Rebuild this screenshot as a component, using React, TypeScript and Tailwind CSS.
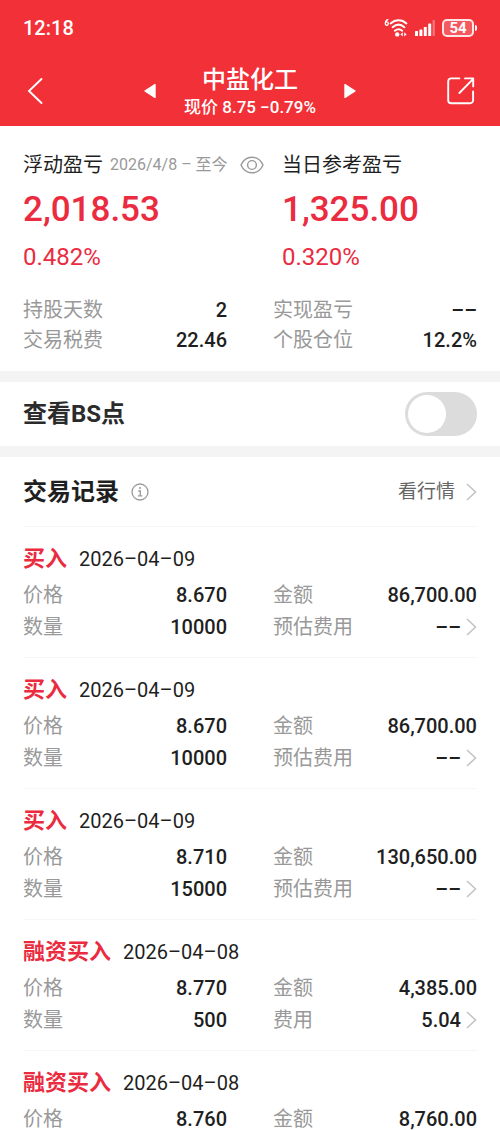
interface TradeRecord {
  type: string;
  date: string;
  price: string;
  amount: string;
  quantity?: string;
  feeLabel?: string;
  fee?: string;
}

const records: TradeRecord[] = [
  { type: "买入", date: "2026–04–09", price: "8.670", amount: "86,700.00", quantity: "10000", feeLabel: "预估费用", fee: "––" },
  { type: "买入", date: "2026–04–09", price: "8.670", amount: "86,700.00", quantity: "10000", feeLabel: "预估费用", fee: "––" },
  { type: "买入", date: "2026–04–09", price: "8.710", amount: "130,650.00", quantity: "15000", feeLabel: "预估费用", fee: "––" },
  { type: "融资买入", date: "2026–04–08", price: "8.770", amount: "4,385.00", quantity: "500", feeLabel: "费用", fee: "5.04" },
  { type: "融资买入", date: "2026–04–08", price: "8.760", amount: "8,760.00" },
];

const stats = [
  { label: "持股天数", value: "2" },
  { label: "实现盈亏", value: "––" },
  { label: "交易税费", value: "22.46" },
  { label: "个股仓位", value: "12.2%" },
];

function ChevronRight() {
  return (
    <svg className="h-5 w-3 shrink-0" viewBox="0 0 12 20" fill="none" stroke="#c4c4c4" strokeWidth="1.6" aria-hidden="true">
      <path d="M2 2l8.5 8L2 18" />
    </svg>
  );
}

function StatusBar() {
  return (
    <div className="flex h-14 items-center justify-between px-[23px]">
      <span className="text-xl font-medium">12:18</span>
      <div className="flex items-center gap-[7px]">
        {/* Wi-Fi 6 */}
        <svg className="h-5 w-6" viewBox="0 0 24 20" fill="none" stroke="#fff" strokeWidth="2" strokeLinecap="round" aria-hidden="true">
          <path d="M3.9 1.6C2.2 2 1.3 3.8 1.3 5.6a1.500 1.700 0 1 0 3 0a1.500 1.700 0 1 0-3 0" strokeWidth="1.300" />
          <path d="M6.600 5.400c4.800-4.200 11.200-4.200 15.800 0" />
          <path d="M8.600 9.200c3.700-3.200 8.100-3.200 11.800 0" />
          <path d="M10.800 12.700c2.400-1.900 5.200-1.900 7.400 0" />
          <circle cx="13.200" cy="16.400" r="2.200" fill="#fff" stroke="none" />
          <path d="M18.800 14.200v4.400L16.400 16.400zM20.200 14.200v4.400l2.400-2.200z" fill="#fff" stroke="none" />
        </svg>
        <svg className="h-4 w-5" viewBox="0 0 20 16" fill="#fff" aria-hidden="true">
          <rect x="0" y="11" width="3" height="5" rx="0.6" />
          <rect x="4.4" y="9.4" width="3" height="6.6" rx="0.6" />
          <rect x="8.8" y="7" width="3" height="9" rx="0.6" />
          <rect x="13.2" y="3.4" width="3" height="12.6" rx="0.6" />
          <rect x="17.6" y="0" width="2.2" height="16" rx="0.6" opacity="0.35" />
        </svg>
        <div className="flex items-center gap-px">
          <span className="flex h-[18px] w-8 items-center justify-center rounded-[5px] border-2 border-white/85 bg-white/20 text-[15px] font-bold">
            54
          </span>
          <span className="h-1.5 w-0.5 rounded-r bg-white" />
        </div>
      </div>
    </div>
  );
}

function NavBar() {
  return (
    <div className="grid h-[70px] grid-cols-[1fr_auto_1fr] items-center px-[23px]">
      <button type="button" aria-label="返回" className="justify-self-start p-1">
        <svg className="h-7 w-4" viewBox="0 0 16 28" fill="none" stroke="#fff" strokeWidth="1.9" strokeLinecap="round" aria-hidden="true">
          <path d="M14.5 2L2 14l12.5 12" />
        </svg>
      </button>
      <div className="flex items-center gap-7">
        <button type="button" aria-label="上一只">
          <svg className="h-4 w-3" viewBox="0 0 12 16" fill="#fff" stroke="#fff" strokeWidth="1.4" strokeLinejoin="round" aria-hidden="true">
            <path d="M1 8l10-6.4v12.8z" />
          </svg>
        </button>
        <div className="pt-0.5 text-center">
          <h1 className="text-2xl leading-[30px] font-medium">中盐化工</h1>
          <p className="text-[17px] leading-6 font-medium">现价 8.75 −0.79%</p>
        </div>
        <button type="button" aria-label="下一只">
          <svg className="h-4 w-3" viewBox="0 0 12 16" fill="#fff" stroke="#fff" strokeWidth="1.4" strokeLinejoin="round" aria-hidden="true">
            <path d="M11 8L1 1.6v12.8z" />
          </svg>
        </button>
      </div>
      <button type="button" aria-label="分享" className="justify-self-end">
        <svg className="size-8" viewBox="0 0 32 32" fill="none" stroke="#fff" strokeWidth="1.9" strokeLinecap="round" strokeLinejoin="round" aria-hidden="true">
          <path d="M14.4 3.4H6.2a3 3 0 0 0-3 3v18.8a3 3 0 0 0 3 3h18.9a3 3 0 0 0 3-3V16.4" />
          <path d="M14.4 18L28 4.2M20 3.4h8.2v8" />
        </svg>
      </button>
    </div>
  );
}

function Summary() {
  return (
    <section className="px-[23px] pt-6 pb-4">
      <div className="grid grid-cols-[241px_1fr] gap-[18px]">
        <div>
          <div className="flex items-center text-xl leading-[30px] whitespace-nowrap">
            <h2>浮动盈亏</h2>
            <span className="ml-[7px] text-base text-[#999]">2026/4/8 – 至今</span>
            <button type="button" aria-label="隐藏金额" className="ml-auto">
              <svg className="h-5 w-6" viewBox="0 0 24 20" fill="none" stroke="#999" strokeWidth="1.4" aria-hidden="true">
                <path d="M1 10c4.6-10.4 17.400-10.400 22 0c-4.600 10.400-17.400 10.400-22 0z" />
                <circle cx="12" cy="10" r="4.400" />
              </svg>
            </button>
          </div>
          <p className="mt-2 text-[35px] leading-11 font-medium text-[#ea2b40]">2,018.53</p>
          <p className="mt-2.5 text-2xl leading-[30px] text-[#ea2b40]">0.482%</p>
        </div>
        <div>
          <h2 className="text-xl leading-[30px]">当日参考盈亏</h2>
          <p className="mt-2 text-[35px] leading-11 font-medium text-[#ea2b40]">1,325.00</p>
          <p className="mt-2.5 text-2xl leading-[30px] text-[#ea2b40]">0.320%</p>
        </div>
      </div>
      <dl className="mt-[23px] grid grid-cols-2 gap-x-[46px] text-xl leading-[30px]">
        {stats.map((stat) => (
          <div key={stat.label} className="flex justify-between">
            <dt className="text-[#999]">{stat.label}</dt>
            <dd className="font-medium">{stat.value}</dd>
          </div>
        ))}
      </dl>
    </section>
  );
}

function RecordItem({ record }: { record: TradeRecord }) {
  return (
    <li className="border-t border-[#f6f6f6] pt-4 pb-3.5">
      <div className="flex items-center gap-3 text-xl leading-8">
        <span className="text-[22px] font-bold text-[#ea2b40]">{record.type}</span>
        <span>{record.date}</span>
      </div>
      <dl className="mt-1 grid grid-cols-2 gap-x-[46px] text-xl leading-8">
        <div className="flex justify-between">
          <dt className="text-[#999]">价格</dt>
          <dd className="font-medium">{record.price}</dd>
        </div>
        <div className="flex justify-between">
          <dt className="text-[#999]">金额</dt>
          <dd className="font-medium">{record.amount}</dd>
        </div>
        {record.quantity && (
          <>
            <div className="flex justify-between">
              <dt className="text-[#999]">数量</dt>
              <dd className="font-medium">{record.quantity}</dd>
            </div>
            <div className="flex justify-between">
              <dt className="text-[#999]">{record.feeLabel}</dt>
              <dd className="flex items-center gap-1 font-medium">
                {record.fee}
                <ChevronRight />
              </dd>
            </div>
          </>
        )}
      </dl>
    </li>
  );
}

export default function App() {
  return (
    <div lang="zh-CN" className="flex h-screen flex-col overflow-hidden bg-white font-[Roboto,'Noto_Sans_CJK_SC',sans-serif] text-[#1f1f1f]">
      <header className="shrink-0 bg-[#f23037] text-white">
        <StatusBar />
        <NavBar />
      </header>
      <main className="min-h-0 flex-1 overflow-hidden">
        <Summary />
        <section className="border-y-[11px] border-[#f4f4f4]">
          <label className="flex h-16 items-center justify-between px-[23px] text-2xl font-bold text-[#2b2b2b]">
            查看BS点
            <input
              type="checkbox"
              role="switch"
              className="h-11 w-[72px] appearance-none rounded-full bg-[#dcdcdc] p-[3px] before:block before:size-[38px] before:rounded-full before:bg-white checked:bg-[#f23037] checked:before:ml-7"
            />
          </label>
        </section>
        <section className="px-[23px]">
          <div className="flex h-[69px] items-center justify-between">
            <div className="flex items-center gap-3">
              <h2 className="text-2xl font-bold">交易记录</h2>
              <button type="button" aria-label="说明">
                <svg className="size-[18px]" viewBox="0 0 18 18" fill="none" stroke="#999" strokeWidth="1.3" aria-hidden="true">
                  <circle cx="9" cy="9" r="8" />
                  <path d="M7.300 8H9.300v4.700M7 12.900h4.300" />
                  <circle cx="9" cy="5" r="1" fill="#999" stroke="none" />
                </svg>
              </button>
            </div>
            <a href="#quote" className="flex items-center gap-2.5 text-[19px] leading-8 text-[#666]">
              看行情
              <ChevronRight />
            </a>
          </div>
          <ul>
            {records.map((record, i) => (
              <RecordItem key={i} record={record} />
            ))}
          </ul>
        </section>
      </main>
    </div>
  );
}
